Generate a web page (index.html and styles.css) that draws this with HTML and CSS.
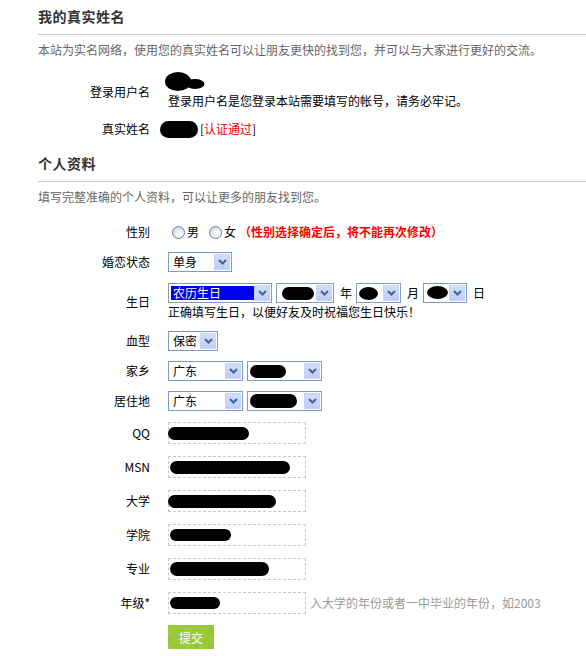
FILE: index.html
```html
<!DOCTYPE html>
<html lang="zh-CN">
<head>
<meta charset="utf-8">
<title>个人资料</title>
<link rel="stylesheet" href="styles.css">
</head>
<body>
<div class="page">
  <h2 class="sec-title first">我的真实姓名</h2>
  <p class="sec-desc">本站为实名网络，使用您的真实姓名可以让朋友更快的找到您，并可以与大家进行更好的交流。</p>

  <div class="row row-login">
    <div class="label">登录用户名</div>
    <div class="value">
      <svg class="blot blot-login" width="40" height="19" viewBox="0 0 40 19"><ellipse cx="13" cy="9.5" rx="13" ry="9.5"/><ellipse cx="30" cy="12" rx="9.5" ry="5"/></svg>
      <div class="note">登录用户名是您登录本站需要填写的帐号，请务必牢记。</div>
    </div>
  </div>

  <div class="row row-real">
    <div class="label">真实姓名</div>
    <div class="value inline">
      <svg class="blot blot-real" width="38" height="17" viewBox="0 0 38 17"><rect x="0" y="0" width="38" height="17" rx="8.5"/></svg>
      <span class="bracket">[<span class="verified">认证通过</span>]</span>
    </div>
  </div>

  <h2 class="sec-title second">个人资料</h2>
  <p class="sec-desc">填写完整准确的个人资料，可以让更多的朋友找到您。</p>

  <div class="row row-sel row-gender">
    <div class="label">性别</div>
    <div class="value inline">
      <span class="radio r1"></span><span class="opt">男</span>
      <span class="radio r2"></span><span class="opt">女</span>
      <span class="warn">（性别选择确定后，将不能再次修改）</span>
    </div>
  </div>

  <div class="row row-sel">
    <div class="label">婚恋状态</div>
    <div class="value inline">
      <div class="sel w-marital"><span class="txt">单身</span><span class="arr"><svg width="9" height="6" viewBox="0 0 9 6"><path d="M1 1 L4.5 4.5 L8 1" /></svg></span></div>
    </div>
  </div>

  <div class="row row-birth">
    <div class="label">生日</div>
    <div class="value">
      <div class="birth-line">
        <div class="sel w-lunar"><span class="txt"><span class="hl">农历生日</span></span><span class="arr"><svg width="9" height="6" viewBox="0 0 9 6"><path d="M1 1 L4.5 4.5 L8 1" /></svg></span></div>
        <div class="sel w-year"><span class="txt"><svg class="blot" width="32" height="13" viewBox="0 0 32 13"><rect width="32" height="13" rx="6.5"/></svg></span><span class="arr"><svg width="9" height="6" viewBox="0 0 9 6"><path d="M1 1 L4.5 4.5 L8 1" /></svg></span></div>
        <span class="unit">年</span>
        <div class="sel w-month"><span class="txt"><svg class="blot" width="19" height="13" viewBox="0 0 19 13"><ellipse cx="9.5" cy="6.5" rx="9.5" ry="6.5"/></svg></span><span class="arr"><svg width="9" height="6" viewBox="0 0 9 6"><path d="M1 1 L4.5 4.5 L8 1" /></svg></span></div>
        <span class="unit">月</span>
        <div class="sel w-day"><span class="txt"><svg class="blot" width="21" height="14" viewBox="0 0 21 14"><ellipse cx="10.5" cy="6.5" rx="10.5" ry="6.5"/></svg></span><span class="arr"><svg width="9" height="6" viewBox="0 0 9 6"><path d="M1 1 L4.5 4.5 L8 1" /></svg></span></div>
        <span class="unit">日</span>
      </div>
      <div class="note birth-note">正确填写生日，以便好友及时祝福您生日快乐！</div>
    </div>
  </div>

  <div class="row row-sel">
    <div class="label">血型</div>
    <div class="value inline">
      <div class="sel w-blood"><span class="txt">保密</span><span class="arr"><svg width="9" height="6" viewBox="0 0 9 6"><path d="M1 1 L4.5 4.5 L8 1" /></svg></span></div>
    </div>
  </div>

  <div class="row row-sel">
    <div class="label">家乡</div>
    <div class="value inline pair">
      <div class="sel w-prov"><span class="txt">广东</span><span class="arr"><svg width="9" height="6" viewBox="0 0 9 6"><path d="M1 1 L4.5 4.5 L8 1" /></svg></span></div>
      <div class="sel w-prov"><span class="txt"><svg class="blot" width="36" height="13" viewBox="0 0 36 13"><rect width="36" height="13" rx="6.5"/></svg></span><span class="arr"><svg width="9" height="6" viewBox="0 0 9 6"><path d="M1 1 L4.5 4.5 L8 1" /></svg></span></div>
    </div>
  </div>

  <div class="row row-sel">
    <div class="label">居住地</div>
    <div class="value inline pair">
      <div class="sel w-prov"><span class="txt">广东</span><span class="arr"><svg width="9" height="6" viewBox="0 0 9 6"><path d="M1 1 L4.5 4.5 L8 1" /></svg></span></div>
      <div class="sel w-prov"><span class="txt"><svg class="blot" width="47" height="14" viewBox="0 0 47 14"><rect width="47" height="14" rx="7"/></svg></span><span class="arr"><svg width="9" height="6" viewBox="0 0 9 6"><path d="M1 1 L4.5 4.5 L8 1" /></svg></span></div>
    </div>
  </div>

  <div class="row row-input">
    <div class="label">QQ</div>
    <div class="value inline">
      <div class="field"><svg class="blot" width="81" height="13" viewBox="0 0 81 13"><rect width="81" height="13" rx="6.5"/></svg></div>
    </div>
  </div>

  <div class="row row-input">
    <div class="label">MSN</div>
    <div class="value inline">
      <div class="field"><svg class="blot b-shift" width="120" height="13" viewBox="0 0 120 13"><rect width="120" height="13" rx="6.5"/></svg></div>
    </div>
  </div>

  <div class="row row-input">
    <div class="label">大学</div>
    <div class="value inline">
      <div class="field"><svg class="blot" width="108" height="13" viewBox="0 0 108 13"><rect width="108" height="13" rx="6.5"/></svg></div>
    </div>
  </div>

  <div class="row row-input">
    <div class="label">学院</div>
    <div class="value inline">
      <div class="field"><svg class="blot b-shift" width="61" height="12" viewBox="0 0 61 12"><rect width="61" height="12" rx="6"/></svg></div>
    </div>
  </div>

  <div class="row row-input">
    <div class="label">专业</div>
    <div class="value inline">
      <div class="field"><svg class="blot b-shift" width="99" height="14" viewBox="0 0 99 14"><rect width="99" height="14" rx="7"/></svg></div>
    </div>
  </div>

  <div class="row row-input">
    <div class="label">年级*</div>
    <div class="value inline">
      <div class="field"><svg class="blot b-shift" width="50" height="12" viewBox="0 0 50 12"><rect width="50" height="12" rx="6"/></svg></div>
      <span class="hint">入大学的年份或者一中毕业的年份，如2003</span>
    </div>
  </div>

  <div class="row row-submit">
    <div class="label"></div>
    <div class="value inline">
      <button class="submit" type="button">提交</button>
    </div>
  </div>
</div>
</body>
</html>
```

FILE: styles.css
```css
html, body {
  margin: 0;
  padding: 0;
  background: #fff;
}

body {
  font-family: "Noto Sans CJK SC", "Liberation Sans", sans-serif;
  font-size: 12px;
  color: #111;
}

.page {
  padding-left: 38px;
}

.sec-title {
  margin: 0;
  padding: 0 0 8px;
  font-size: 14px;
  line-height: 20px;
  font-weight: bold;
  color: #333;
  letter-spacing: 0.5px;
  border-bottom: 1px solid #ccc;
}

.sec-title.first {
  margin-top: 6px;
}

.sec-title.second {
  margin-top: 15px;
}

.sec-desc {
  margin: 7px 0 0;
  line-height: 16px;
  color: #666;
}

.row {
  display: flex;
  align-items: center;
  gap: 18px;
}

.label {
  width: 112px;
  flex: none;
  text-align: right;
  line-height: 16px;
  color: #000;
}

.value {
  line-height: 16px;
}

.value.inline {
  display: flex;
  align-items: center;
}

.note {
  color: #000;
}

.blot {
  display: block;
  fill: #000;
}

/* 登录用户名 */
.row-login {
  margin-top: 14px;
}

.row-login .label {
  padding-top: 3px;
}

.blot-login {
  margin-left: -3px;
}

.row-login .note {
  margin-top: 2px;
}

/* 真实姓名 */
.row-real {
  margin-top: 11px;
  height: 18px;
}

.blot-real {
  margin-left: -8px;
  margin-right: 2px;
}

.bracket {
  color: #000;
}

.verified {
  color: #e00;
}

/* select rows */
.row-sel {
  box-sizing: border-box;
  height: 30px;
}

.row-gender {
  margin-top: 12px;
}

.radio {
  display: inline-block;
  box-sizing: border-box;
  width: 13px;
  height: 13px;
  border-radius: 50%;
  border: 1px solid #5a80ad;
  background: radial-gradient(circle at 65% 65%, #ffffff 0, #f2f2ee 35%, #d6d9e0 75%, #c4cad6 100%);
}

.radio.r1 {
  margin-left: 4px;
}

.radio.r2 {
  margin-left: 10px;
}

.opt {
  margin-left: 2px;
  color: #000;
}

.warn {
  margin-left: 3px;
  color: #f00;
  font-weight: bold;
}

.sel {
  box-sizing: border-box;
  height: 20px;
  display: flex;
  align-items: center;
  border: 1px solid #7f9db9;
  background: #fff;
  padding: 1px;
}

.sel .txt {
  flex: 1;
  display: flex;
  align-items: center;
  height: 16px;
  padding-left: 3px;
  line-height: 16px;
  color: #000;
  overflow: hidden;
  white-space: nowrap;
}

.sel .arr {
  flex: none;
  box-sizing: border-box;
  width: 16px;
  height: 16px;
  display: flex;
  align-items: center;
  justify-content: center;
  background: linear-gradient(#d2defd, #bccdf9);
  border: 1px solid #c4d3fb;
}

.sel .arr svg {
  display: block;
  fill: none;
  stroke: #4d6185;
  stroke-width: 2;
}

.w-marital { width: 64px; }
.w-lunar { width: 104px; }
.w-year { width: 58px; }
.w-month { width: 45px; }
.w-day { width: 44px; }
.w-blood { width: 50px; }
.w-prov { width: 75px; }

.w-lunar .txt {
  padding-left: 1px;
}

.hl {
  display: block;
  flex: 1;
  height: 14px;
  line-height: 14px;
  padding-left: 2px;
  background: #0000f0;
  color: #fff;
}

.w-year .txt { padding-left: 4px; }
.w-month .txt { padding-left: 1px; }
.w-day .txt { padding-left: 2px; }

.pair {
  gap: 4px;
}

.pair .sel + .sel .txt {
  padding-left: 1px;
}

/* birthday */
.row-birth {
  padding: 6px 0;
}

.birth-line {
  display: flex;
  align-items: center;
  gap: 4px;
}

.unit {
  padding-left: 2px;
  color: #000;
}

.birth-note {
  margin-top: 1px;
}

/* inputs */
.row-input {
  padding: 6px 0;
}

.field {
  box-sizing: border-box;
  width: 138px;
  height: 22px;
  border: 1px dashed #c8c8c8;
  display: flex;
  align-items: center;
  padding-left: 0;
}

.field .blot {
  margin-left: -1px;
}

.field .blot.b-shift {
  margin-left: 1px;
}

.hint {
  margin-left: 4px;
  color: #999;
}

/* submit */
.row-submit {
  margin-top: 5px;
}

.submit {
  width: 46px;
  height: 24px;
  margin: 0;
  padding: 0;
  border: none;
  font-family: "Noto Sans CJK SC", "Liberation Sans", sans-serif;
  font-size: 12px;
  color: #fff;
  background-color: #99cc33;
  background-image: repeating-linear-gradient(45deg, rgba(255,255,255,0.08) 0 1px, transparent 1px 2px), repeating-linear-gradient(-45deg, rgba(0,0,0,0.05) 0 1px, transparent 1px 2px);
  cursor: pointer;
}
```
